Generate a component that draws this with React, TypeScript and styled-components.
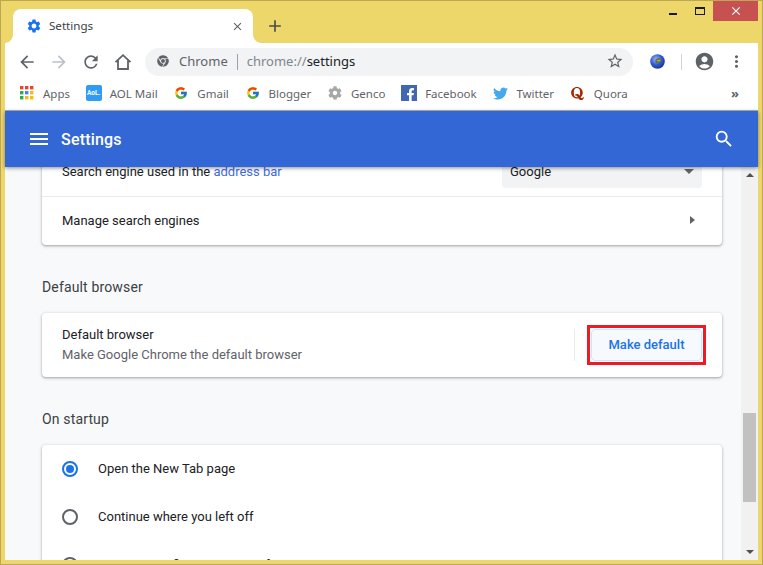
import React from "react";
import styled, { createGlobalStyle } from "styled-components";
import {
  MdAccountCircle,
  MdAdd,
  MdArrowBack,
  MdArrowForward,
  MdClose,
  MdMenu,
  MdMoreVert,
  MdRefresh,
  MdSearch,
  MdSettings,
  MdStarBorder,
} from "react-icons/md";
import { FaChrome, FaCog, FaFacebookF, FaTwitter, FaQuora } from "react-icons/fa";
import { FcGoogle } from "react-icons/fc";

const UI_FONT = `"Noto Sans", "Open Sans", sans-serif`;
const PAGE_FONT = `Roboto, "Liberation Sans", sans-serif`;

const GlobalStyle = createGlobalStyle`
  html, body {
    margin: 0;
    padding: 0;
    overflow: hidden;
  }
  * {
    box-sizing: border-box;
  }
`;

const Window = styled.div`
  width: 763px;
  height: 565px;
  display: flex;
  flex-direction: column;
  background: #eed76a;
  border: 1px solid #bda654;
  padding: 0 4px 4px;
  overflow: hidden;
`;

const TitleBar = styled.div`
  height: 42px;
  flex: none;
  display: flex;
  align-items: flex-end;
  position: relative;
`;

const Tab = styled.div`
  width: 240px;
  height: 34px;
  margin-left: 8px;
  background: #fff;
  border-radius: 8px 8px 0 0;
  display: flex;
  align-items: center;
  padding: 0 9px 0 13px;
  position: relative;
  &::before,
  &::after {
    content: "";
    position: absolute;
    bottom: 0;
    width: 8px;
    height: 8px;
  }
  &::before {
    left: -8px;
    background: radial-gradient(circle at 0 0, transparent 7.5px, #fff 8px);
  }
  &::after {
    right: -8px;
    background: radial-gradient(circle at 100% 0, transparent 7.5px, #fff 8px);
  }
`;

const TabTitle = styled.span`
  flex: 1;
  margin-left: 7px;
  padding-bottom: 2px;
  font: 11.6px ${UI_FONT};
  color: #3c4043;
`;

const NewTab = styled.div`
  margin: 0 0 3px 12px;
  height: 28px;
  display: flex;
  align-items: center;
  color: #4a4d50;
`;

const WindowControls = styled.div`
  position: absolute;
  top: 0;
  right: 0;
  display: flex;
`;

const ControlButton = styled.div<{ $close?: boolean }>`
  width: ${(p) => (p.$close ? "45px" : "27px")};
  height: 20px;
  display: flex;
  align-items: center;
  justify-content: center;
  background: ${(p) => (p.$close ? "#c75050" : "transparent")};
  color: ${(p) => (p.$close ? "#fff" : "#1a1a1a")};
`;

const MinGlyph = styled.div`
  width: 8px;
  height: 2px;
  margin: 6px 0 0 1px;
  background: #1a1a1a;
`;

const MaxGlyph = styled.div`
  width: 10px;
  height: 8px;
  border: 1px solid #1a1a1a;
  border-top-width: 2px;
`;

const Toolbar = styled.div`
  height: 33px;
  flex: none;
  background: #fff;
  display: flex;
  align-items: center;
  padding: 4px 0 0 0;
`;

const NavIcon = styled.div<{ $dim?: boolean; $w?: number }>`
  width: ${(p) => p.$w ?? 32}px;
  height: 28px;
  flex: none;
  display: flex;
  align-items: center;
  justify-content: center;
  color: ${(p) => (p.$dim ? "#bdc1c6" : "#5f6368")};
`;

const NavGroup = styled.div`
  display: flex;
  margin: 0 6px 0 6px;
`;

const AddressBar = styled.div`
  width: 488px;
  height: 28px;
  flex: none;
  border-radius: 14px;
  background: #f1f3f4;
  display: flex;
  align-items: center;
  padding: 0 9px 2px 12px;
  font: 13px ${UI_FONT};
`;

const SiteName = styled.span`
  color: #5f6368;
  margin-left: 10px;
`;

const AddressDivider = styled.span`
  width: 1px;
  height: 16px;
  margin: 2px 9px 0;
  background: #9aa0a6;
`;

const UrlScheme = styled.span`
  color: #80868b;
`;

const UrlPath = styled.span`
  color: #202124;
  flex: 1;
`;

const ToolbarRight = styled.div`
  display: flex;
  align-items: center;
  margin-left: 10px;
`;

const ToolDivider = styled.div`
  width: 1px;
  height: 16px;
  margin: 0 9px 0 10px;
  background: #d0d2d4;
`;

const Bookmarks = styled.div`
  height: 35px;
  flex: none;
  background: #fff;
  border-bottom: 1px solid #b4b4b4;
  display: flex;
  align-items: center;
  padding: 0 19px 0 14px;
`;

const Bookmark = styled.div`
  display: flex;
  align-items: center;
  margin-right: 15.7px;
  font: 11.5px ${UI_FONT};
  color: #5f6368;
`;

const BookmarkIcon = styled.div`
  width: 16px;
  height: 16px;
  margin-right: 8px;
  display: flex;
  align-items: center;
  justify-content: center;
  flex: none;
`;

const AolBadge = styled.div`
  width: 16px;
  height: 16px;
  border-radius: 2px;
  background: #2f9bf4;
  color: #fff;
  font: 700 6.5px ${PAGE_FONT};
  display: flex;
  align-items: center;
  justify-content: center;
`;

const FacebookBadge = styled.div`
  width: 16px;
  height: 16px;
  background: #4267b2;
  color: #fff;
  display: flex;
  align-items: flex-end;
  justify-content: flex-end;
  overflow: hidden;
`;

const More = styled.div`
  margin-left: auto;
  font: 700 13px ${UI_FONT};
  color: #5f6368;
`;

const Page = styled.div`
  flex: 1;
  min-height: 0;
  display: flex;
  flex-direction: column;
  background: #f8f9fa;
`;

const Header = styled.div`
  height: 56px;
  flex: none;
  background: #3367d6;
  color: #fff;
  display: flex;
  align-items: center;
  padding: 0 23px 0 22px;
  box-shadow: 0 1px 4px rgba(0, 0, 0, 0.45);
  position: relative;
  z-index: 1;
`;

const HeaderTitle = styled.div`
  flex: 1;
  margin-left: 10px;
  font: 500 16px ${PAGE_FONT};
  letter-spacing: 0.2px;
`;

const Body = styled.div`
  flex: 1;
  min-height: 0;
  display: flex;
`;

const Scroller = styled.div`
  flex: 1;
  min-width: 0;
  overflow: hidden;
  padding: 0 19px 0 37px;
  font: 13px ${PAGE_FONT};
  color: #202124;
`;

const Card = styled.div<{ $clipTop?: boolean }>`
  background: #fff;
  border-radius: 4px;
  box-shadow: 0 1px 2px rgba(60, 64, 67, 0.3), 0 1px 3px 1px rgba(60, 64, 67, 0.15);
  margin-top: ${(p) => (p.$clipTop ? "-19px" : "0")};
`;

const Heading = styled.div`
  height: 68px;
  display: flex;
  align-items: center;
  font-size: 14px;
  letter-spacing: 0.15px;
  color: #3c4043;
  padding-top: 15px;
`;

const Row = styled.div<{ $divider?: boolean; $h?: number }>`
  height: ${(p) => p.$h ?? 49}px;
  display: flex;
  align-items: center;
  padding: 0 20px 2px;
  border-top: ${(p) => (p.$divider ? "1px solid #e8eaed" : "none")};
`;

const Grow = styled.div`
  flex: 1;
`;

const Link = styled.span`
  color: #3f6ad8;
`;

const Select = styled.div`
  width: 200px;
  height: 30px;
  margin-top: 4px;
  background: #f1f3f4;
  border-radius: 4px;
  display: flex;
  align-items: center;
  justify-content: space-between;
  padding: 0 8px 4px;
`;

const SelectCaret = styled.div`
  width: 0;
  height: 0;
  border-left: 5px solid transparent;
  border-right: 5px solid transparent;
  border-top: 5px solid #5f6368;
`;

const SubArrow = styled.div`
  width: 0;
  height: 0;
  margin-right: 7px;
  border-top: 4.5px solid transparent;
  border-bottom: 4.5px solid transparent;
  border-left: 5px solid #5f6368;
`;

const DefaultRow = styled.div`
  height: 64px;
  display: flex;
  align-items: center;
  padding: 0 16px 0 20px;
`;

const RowText = styled.div`
  padding-bottom: 2px;
`;

const SecondaryText = styled.div`
  color: #5f6368;
  margin-top: 5px;
`;

const ActionDivider = styled.div`
  width: 1px;
  height: 32px;
  background: #e8eaed;
  margin-right: 12px;
`;

const Highlight = styled.div`
  border: 3px solid #ed1c24;
  padding: 1px;
  display: flex;
`;

const MakeDefault = styled.div`
  width: 111px;
  height: 32px;
  padding-bottom: 2px;
  border: 1px solid #d2e3fc;
  border-radius: 4px;
  background: #f6f9fe;
  color: #1a73e8;
  font: 500 13px ${PAGE_FONT};
  display: flex;
  align-items: center;
  justify-content: center;
`;

const RadioRow = styled.div`
  height: 48px;
  display: flex;
  align-items: center;
  padding: 0 20px;
`;

const Radio = styled.div<{ $checked?: boolean }>`
  width: 16px;
  height: 16px;
  border-radius: 50%;
  border: 2px solid ${(p) => (p.$checked ? "#1a73e8" : "#5f6368")};
  margin-right: 20px;
  flex: none;
  display: flex;
  align-items: center;
  justify-content: center;
  &::after {
    content: "";
    width: 8px;
    height: 8px;
    border-radius: 50%;
    background: ${(p) => (p.$checked ? "#1a73e8" : "transparent")};
  }
`;

const Scrollbar = styled.div`
  width: 17px;
  flex: none;
  background: #f1f1f1;
  display: flex;
  flex-direction: column;
  align-items: center;
  padding: 6px 0;
  position: relative;
`;

const ScrollArrow = styled.div<{ $down?: boolean }>`
  width: 0;
  height: 0;
  border-left: 4px solid transparent;
  border-right: 4px solid transparent;
  ${(p) => (p.$down ? "border-top: 4px solid #505050;" : "border-bottom: 4px solid #505050;")}
`;

const ScrollThumb = styled.div`
  width: 13px;
  height: 89px;
  margin-top: auto;
  margin-bottom: 48px;
  background: #c1c1c1;
`;

const AppsIcon = () => {
  const colors = ["#ea4335", "#ea4335", "#ea4335", "#34a853", "#4285f4", "#fbbc05", "#34a853", "#fbbc05", "#fbbc05"];
  return (
    <svg width="14" height="14" viewBox="0 0 14 14">
      {colors.map((c, i) => (
        <rect key={i} x={(i % 3) * 5} y={Math.floor(i / 3) * 5} width="3.4" height="3.4" fill={c} />
      ))}
    </svg>
  );
};

const HomeIcon = () => (
  <svg width="18" height="18" viewBox="0 0 18 18" fill="none" stroke="#5f6368" strokeWidth="1.8">
    <path d="M1.5 9.2 9 2.2l7.5 7M4 7.5V16h10V7.5" />
  </svg>
);

const GlobeIcon = () => (
  <svg width="15" height="15" viewBox="0 0 16 16">
    <defs>
      <radialGradient id="globe" cx="40%" cy="35%" r="70%">
        <stop offset="0%" stopColor="#9db8ee" />
        <stop offset="55%" stopColor="#2f5ad0" />
        <stop offset="100%" stopColor="#1c2f96" />
      </radialGradient>
    </defs>
    <circle cx="8" cy="8" r="7.8" fill="url(#globe)" />
    <path d="M6 5.5c2-1.5 5-1 6 0s-.5 3-2 3-1 2.5-2 2.5-3-3.5-2-5.5z" fill="#5f7a4a" />
    <path d="M7.5 6.5h3.5v1.2H7.5z" fill="#d4a83a" />
  </svg>
);

export default function App() {
  return (
    <Window>
      <GlobalStyle />
      <TitleBar>
        <Tab>
          <MdSettings size={16} color="#1a73e8" />
          <TabTitle>Settings</TabTitle>
          <MdClose size={13} color="#5f6368" />
        </Tab>
        <NewTab>
          <MdAdd size={20} />
        </NewTab>
        <WindowControls>
          <ControlButton>
            <MinGlyph />
          </ControlButton>
          <ControlButton>
            <MaxGlyph />
          </ControlButton>
          <ControlButton $close>
            <MdClose size={14} />
          </ControlButton>
        </WindowControls>
      </TitleBar>

      <Toolbar>
        <NavGroup>
          <NavIcon>
            <MdArrowBack size={20} />
          </NavIcon>
          <NavIcon $dim>
            <MdArrowForward size={20} />
          </NavIcon>
          <NavIcon>
            <MdRefresh size={20} />
          </NavIcon>
          <NavIcon>
            <HomeIcon />
          </NavIcon>
        </NavGroup>
        <AddressBar>
          <FaChrome size={12} color="#5f6368" />
          <SiteName>Chrome</SiteName>
          <AddressDivider />
          <UrlScheme>chrome://</UrlScheme>
          <UrlPath>settings</UrlPath>
          <MdStarBorder size={18} color="#5f6368" />
        </AddressBar>
        <ToolbarRight>
          <NavIcon $w={28}>
            <GlobeIcon />
          </NavIcon>
          <ToolDivider />
          <NavIcon $w={26}>
            <MdAccountCircle size={21} />
          </NavIcon>
          <NavIcon $w={38}>
            <MdMoreVert size={19} />
          </NavIcon>
        </ToolbarRight>
      </Toolbar>

      <Bookmarks>
        <Bookmark>
          <BookmarkIcon>
            <AppsIcon />
          </BookmarkIcon>
          Apps
        </Bookmark>
        <Bookmark>
          <BookmarkIcon>
            <AolBadge>AoL.</AolBadge>
          </BookmarkIcon>
          AOL Mail
        </Bookmark>
        <Bookmark>
          <BookmarkIcon>
            <FcGoogle size={14} />
          </BookmarkIcon>
          Gmail
        </Bookmark>
        <Bookmark>
          <BookmarkIcon>
            <FcGoogle size={14} />
          </BookmarkIcon>
          Blogger
        </Bookmark>
        <Bookmark>
          <BookmarkIcon>
            <FaCog size={14} color="#a8a8a8" />
          </BookmarkIcon>
          Genco
        </Bookmark>
        <Bookmark>
          <BookmarkIcon>
            <FacebookBadge>
              <FaFacebookF size={13} />
            </FacebookBadge>
          </BookmarkIcon>
          Facebook
        </Bookmark>
        <Bookmark>
          <BookmarkIcon>
            <FaTwitter size={15} color="#45a9ee" />
          </BookmarkIcon>
          Twitter
        </Bookmark>
        <Bookmark>
          <BookmarkIcon>
            <FaQuora size={15} color="#a82400" />
          </BookmarkIcon>
          Quora
        </Bookmark>
        <More>»</More>
      </Bookmarks>

      <Page>
        <Header>
          <MdMenu size={24} />
          <HeaderTitle>Settings</HeaderTitle>
          <MdSearch size={22} />
        </Header>
        <Body>
          <Scroller>
            <Card $clipTop>
              <Row $h={48}>
                Search engine used in the&nbsp;<Link>address bar</Link>
                <Grow />
                <Select>
                  Google
                  <SelectCaret />
                </Select>
              </Row>
              <Row $divider>
                Manage search engines
                <Grow />
                <SubArrow />
              </Row>
            </Card>
            <Heading>Default browser</Heading>
            <Card>
              <DefaultRow>
                <RowText>
                  Default browser
                  <SecondaryText>Make Google Chrome the default browser</SecondaryText>
                </RowText>
                <Grow />
                <ActionDivider />
                <Highlight>
                  <MakeDefault>Make default</MakeDefault>
                </Highlight>
              </DefaultRow>
            </Card>
            <Heading>On startup</Heading>
            <Card>
              <RadioRow>
                <Radio $checked />
                <RowText>Open the New Tab page</RowText>
              </RadioRow>
              <RadioRow>
                <Radio />
                <RowText>Continue where you left off</RowText>
              </RadioRow>
              <RadioRow>
                <Radio />
                <RowText>Open a specific page or set of pages</RowText>
              </RadioRow>
            </Card>
          </Scroller>
          <Scrollbar>
            <ScrollArrow />
            <ScrollThumb />
            <ScrollArrow $down />
          </Scrollbar>
        </Body>
      </Page>
    </Window>
  );
}
